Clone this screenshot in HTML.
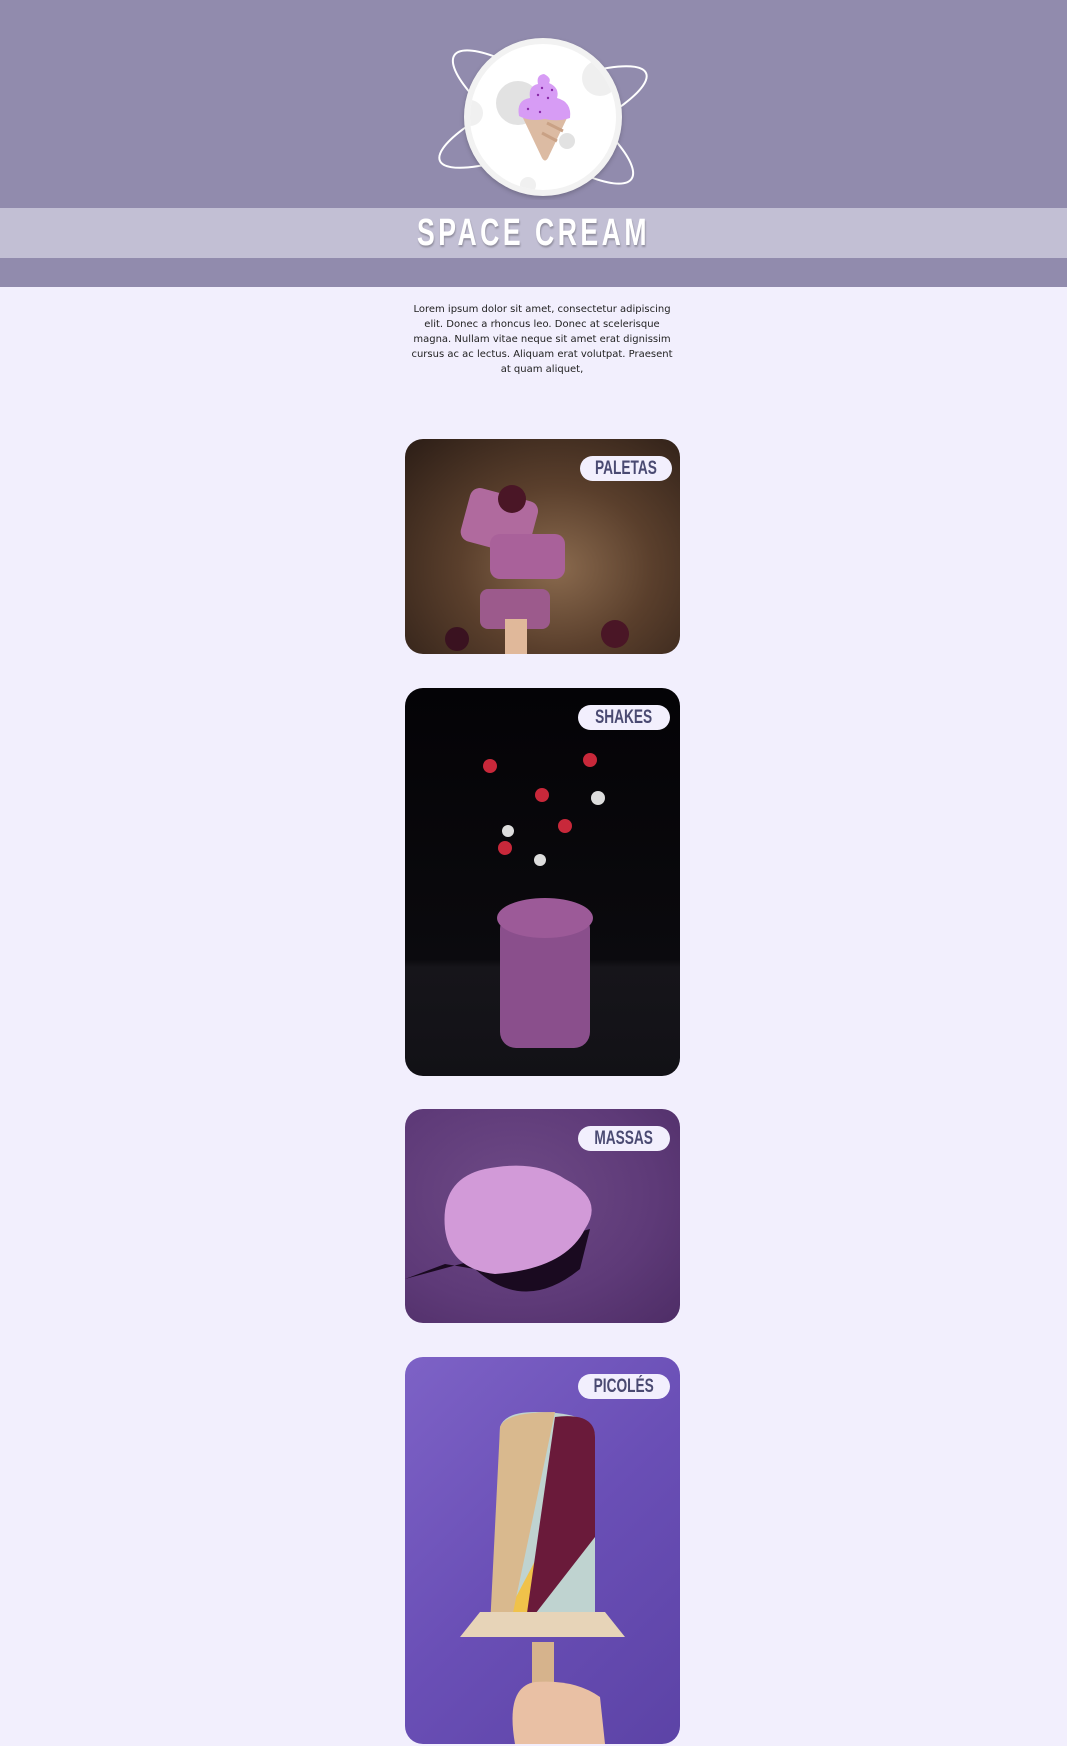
<!DOCTYPE html>
<html><head><meta charset="utf-8"><style>
*{margin:0;padding:0;box-sizing:border-box}
body{width:1067px;height:1746px;background:#f2effd;font-family:"Liberation Sans",sans-serif;overflow:hidden;position:relative}
.header{position:absolute;left:0;top:0;width:1067px;height:287px;background:#918bad}
.band{position:absolute;left:0;top:208px;width:1067px;height:50px;background:#c2bfd4}
.title{position:absolute;left:0;top:208px;width:1067px;height:50px;text-align:center;font:bold 38px/50px "Liberation Sans",sans-serif;color:#fff;text-shadow:1px 2px 2px rgba(0,0,0,.25)}
.title span{display:inline-block;transform:scaleX(0.7);letter-spacing:5px}
.text{position:absolute;left:408px;top:302px;width:268px;text-align:center;font-family:"DejaVu Sans",sans-serif;font-size:10px;line-height:15px;color:#222}
.card{position:absolute;left:405px;width:275px;border-radius:18px;overflow:hidden}
.pill{position:absolute;right:10px;top:17px;width:92px;height:25px;border-radius:13px;background:#f2effd;color:#4a4a72;text-align:center;font:bold 19px/25px "Liberation Sans",sans-serif}
.pill span{display:inline-block;transform:scaleX(0.72)}
</style></head><body>
<div class="header"></div>
<div class="band"></div>
<svg style="position:absolute;left:430px;top:30px" width="230" height="170" viewBox="0 0 230 170">
 <defs><clipPath id="c"><circle cx="113" cy="87" r="73"/></clipPath></defs>
 <ellipse cx="113" cy="87" rx="108" ry="30" transform="rotate(35 113 87)" fill="none" stroke="#fff" stroke-width="2"/>
 <ellipse cx="113" cy="87" rx="112" ry="28" transform="rotate(-23 113 87)" fill="none" stroke="#fff" stroke-width="2"/>
 <circle cx="113" cy="87" r="79" fill="#f2f2f2" filter="drop-shadow(0 2px 2px rgba(0,0,0,.2))"/>
 <circle cx="113" cy="87" r="73" fill="#fff"/>
 <g clip-path="url(#c)">
  <circle cx="88" cy="73" r="22" fill="#e2e2e2"/>
  <circle cx="137" cy="111" r="8" fill="#e2e2e2"/>
  <circle cx="170" cy="48" r="18" fill="#efefef"/>
  <circle cx="40" cy="83" r="13" fill="#f0f0f0"/>
  <circle cx="98" cy="155" r="8" fill="#f0f0f0"/>
 </g>
 <path d="M93 88 L137 88 L118 128 Q115 133 112 128 Z" fill="#dcbba3"/>
 <path d="M117 93 L133 101 M112 103 L127 111" stroke="#c9a185" stroke-width="3"/>
 <path d="M89 86 Q86 70 100 68 Q98 56 108 54 Q106 45 114 44 Q122 48 119 53 Q130 58 127 68 Q142 72 140 88 Q128 92 115 89 Q100 92 89 86 Z" fill="#d79cf5"/>
 <g fill="#8a2aa8"><circle cx="98" cy="79" r="1.2"/><circle cx="108" cy="65" r="1.2"/><circle cx="118" cy="68" r="1.2"/><circle cx="112" cy="58" r="1.2"/><circle cx="122" cy="60" r="1.2"/><circle cx="110" cy="82" r="1.2"/></g>
</svg>
<div class="title"><span>SPACE CREAM</span></div>
<div class="text">Lorem ipsum dolor sit amet, consectetur adipiscing elit. Donec a rhoncus leo. Donec at scelerisque magna. Nullam vitae neque sit amet erat dignissim cursus ac ac lectus. Aliquam erat volutpat. Praesent at quam aliquet,</div>

<div class="card" style="top:439px;height:215px;background:radial-gradient(ellipse at 55% 60%,#8a6a4e 0%,#5a3f2c 45%,#2b1d16 100%)">
 <svg width="275" height="215" style="position:absolute;left:0;top:0">
  <rect x="60" y="55" width="70" height="55" rx="10" fill="#b06a9e" transform="rotate(15 95 80)"/>
  <rect x="85" y="95" width="75" height="45" rx="10" fill="#a9619a"/>
  <rect x="75" y="150" width="70" height="40" rx="8" fill="#9c5a8c"/>
  <rect x="100" y="180" width="22" height="35" fill="#e0b89a"/>
  <circle cx="107" cy="60" r="14" fill="#4a1626"/>
  <circle cx="210" cy="195" r="14" fill="#4a1626"/>
  <circle cx="52" cy="200" r="12" fill="#3a1220"/>
 </svg>
 <div class="pill" style="right:8px"><span>PALETAS</span></div>
</div>

<div class="card" style="top:688px;height:388px;background:linear-gradient(#040306 0%,#0b0a0e 70%,#16151a 72%,#121116 100%)">
 <svg width="275" height="388" style="position:absolute;left:0;top:0">
  <rect x="95" y="225" width="90" height="135" rx="16" fill="#8a4f8c"/>
  <ellipse cx="140" cy="230" rx="48" ry="20" fill="#9c5a98"/>
  <circle cx="85" cy="78" r="7" fill="#c8283a"/><circle cx="185" cy="72" r="7" fill="#c8283a"/>
  <circle cx="137" cy="107" r="7" fill="#c8283a"/><circle cx="160" cy="138" r="7" fill="#c8283a"/>
  <circle cx="100" cy="160" r="7" fill="#c8283a"/><circle cx="193" cy="110" r="7" fill="#ddd"/>
  <circle cx="103" cy="143" r="6" fill="#ddd"/><circle cx="135" cy="172" r="6" fill="#ddd"/>
 </svg>
 <div class="pill"><span>SHAKES</span></div>
</div>

<div class="card" style="top:1109px;height:214px;background:radial-gradient(ellipse at 40% 40%,#6e4a86 0%,#5e3a78 60%,#4e2d66 100%)">
 <svg width="275" height="214" style="position:absolute;left:0;top:0">
  <path d="M0 170 L40 155 L70 160 Q120 205 175 160 L185 120 Z" fill="#1a0a20"/>
  <path d="M40 120 Q35 70 80 60 Q130 50 160 70 Q200 90 180 120 Q160 160 90 165 Q45 160 40 120Z" fill="#d29ad8"/>
 </svg>
 <div class="pill"><span>MASSAS</span></div>
</div>

<div class="card" style="top:1357px;height:387px;background:linear-gradient(135deg,#7d62c6,#6a4fb6 50%,#5c43a6)">
 <svg width="275" height="387" style="position:absolute;left:0;top:0">
  <path d="M95 70 Q100 55 130 55 Q190 55 190 80 L190 280 L90 280 Z" fill="#bfd3d0"/>
  <path d="M190 90 L190 170 L110 280 L90 280 Z" fill="#f0c24a"/>
  <path d="M150 60 Q190 55 190 80 L190 180 L120 270 Z" fill="#6a1a3a"/>
  <path d="M95 70 Q100 55 150 55 L105 270 L85 270 Z" fill="#d9b98e"/>
  <path d="M55 280 L220 280 L200 255 L75 255 Z" fill="#e7d4b8"/>
  <rect x="127" y="285" width="22" height="60" fill="#d6b38c"/>
  <path d="M110 387 Q100 330 130 325 Q170 322 195 340 L200 387Z" fill="#e9c0a4"/>
 </svg>
 <div class="pill"><span>PICOLÉS</span></div>
</div>
</body></html>
